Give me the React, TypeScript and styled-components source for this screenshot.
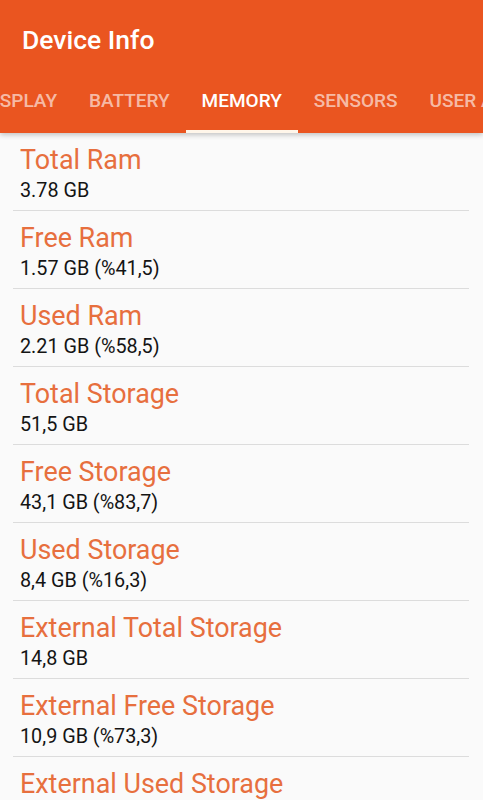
import React from "react";
import styled, { createGlobalStyle } from "styled-components";

const Global = createGlobalStyle`
  html, body { margin: 0; padding: 0; background: #fafafa; }
  body { font-family: Roboto, "Noto Sans", sans-serif; overflow: hidden; }
`;

const Page = styled.div`
  width: 483px;
  height: 800px;
  overflow: hidden;
  background: #fafafa;
  display: flex;
  flex-direction: column;
`;

const Header = styled.header`
  background: #ea5520;
  box-shadow: 0 2px 5px rgba(0, 0, 0, 0.22);
  position: relative;
  z-index: 1;
`;

const TitleBar = styled.div`
  height: 80px;
  display: flex;
  align-items: center;
  padding-left: 22px;
`;

const Title = styled.h1`
  margin: 0;
  font-size: 26.5px;
  font-weight: 500;
  color: #ffffff;
  line-height: 30px;
`;

const TabStrip = styled.div`
  height: 53px;
  overflow: hidden;
`;

const TabRow = styled.div`
  display: flex;
  margin-left: -34px;
  height: 100%;
`;

const Tab = styled.div<{ $active?: boolean }>`
  flex: none;
  padding: 10px 16px 0;
  font-size: 19px;
  line-height: 22px;
  font-weight: 500;
  color: ${(p) => (p.$active ? "#ffffff" : "rgba(255,255,255,0.62)")};
  white-space: nowrap;
  position: relative;
  &::after {
    content: "";
    display: ${(p) => (p.$active ? "block" : "none")};
    position: absolute;
    left: 0;
    right: 0;
    bottom: 0;
    height: 3px;
    background: #fff6ea;
  }
`;

const List = styled.div`
  display: flex;
  flex-direction: column;
`;

const Item = styled.div`
  margin: 0 14px 0 13px;
  padding: 12px 0 4px 7px;
  border-bottom: 1px solid #dcdcdc;
`;

const Label = styled.div`
  font-size: 26.9px;
  line-height: 30px;
  color: #e76f3e;
`;

const Value = styled.div`
  margin-top: 1px;
  font-size: 19.8px;
  line-height: 30px;
  color: #141414;
`;

const tabs = ["DISPLAY", "BATTERY", "MEMORY", "SENSORS", "USER APPS"];

const items: [string, string][] = [
  ["Total Ram", "3.78 GB"],
  ["Free Ram", "1.57 GB (%41,5)"],
  ["Used Ram", "2.21 GB (%58,5)"],
  ["Total Storage", "51,5 GB"],
  ["Free Storage", "43,1 GB (%83,7)"],
  ["Used Storage", "8,4 GB (%16,3)"],
  ["External Total Storage", "14,8 GB"],
  ["External Free Storage", "10,9 GB (%73,3)"],
  ["External Used Storage", "3,9 GB (%26,7)"],
];

export default function App() {
  return (
    <Page>
      <Global />
      <Header>
        <TitleBar>
          <Title>Device Info</Title>
        </TitleBar>
        <TabStrip>
          <TabRow>
            {tabs.map((t) => (
              <Tab key={t} $active={t === "MEMORY"}>
                {t}
              </Tab>
            ))}
          </TabRow>
        </TabStrip>
      </Header>
      <List>
        {items.map(([l, v]) => (
          <Item key={l}>
            <Label>{l}</Label>
            <Value>{v}</Value>
          </Item>
        ))}
      </List>
    </Page>
  );
}
